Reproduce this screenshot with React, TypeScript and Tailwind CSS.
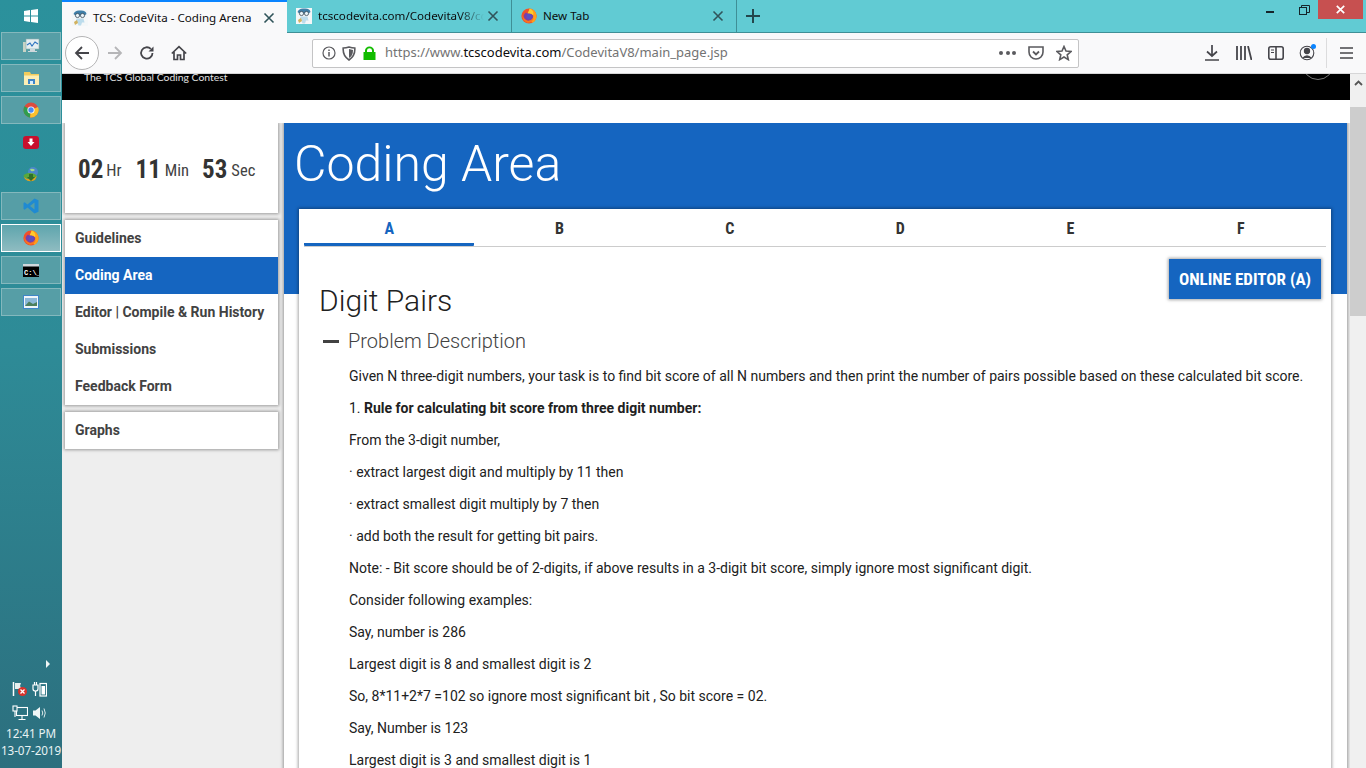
import React from "react";

const roboto = "font-['Roboto',sans-serif]";

function Mascot() {
  return (
    <svg width="16" height="16" viewBox="0 0 16 16" className="shrink-0">
      <rect width="16" height="16" fill="#f4f7f8" />
      <path d="M1.5 4 Q3 0 8 0.5 Q14 0 14.5 4 L12 6 L4 6 Z" fill="#3f7fa8" />
      <circle cx="5.5" cy="5.5" r="2.1" fill="#e8f3f8" stroke="#3a4a58" strokeWidth="0.8" />
      <circle cx="10.5" cy="5.5" r="2.1" fill="#e8f3f8" stroke="#3a4a58" strokeWidth="0.8" />
      <path d="M4.5 8.5 h7 l1 4 h-2.5 l-1 3 h-2.5 l-1-3 h-2 z" fill="#bcdcec" />
      <path d="M2 12 l3-2 1 3 -3 2z" fill="#d2b25e" />
    </svg>
  );
}

function Firefox({ size = 16 }: { size?: number }) {
  return (
    <svg width={size} height={size} viewBox="0 0 16 16" className="shrink-0">
      <circle cx="8" cy="8" r="7.6" fill="#f0502a" />
      <path d="M8 .4A7.6 7.6 0 0 1 15.6 8 7.6 7.6 0 0 1 11 15 L8 8z" fill="#ff9f1c" />
      <path d="M4.5 4.8 A4.6 4.6 0 1 0 11.8 6.6 L8 5.2z" fill="#7b3fa6" />
      <circle cx="8" cy="8.4" r="2.6" fill="#5a4fc4" />
      <path d="M9 .8 Q13.5 3 12 7.2 Q10 4.6 6.6 5.6 Q7.4 3 9 .8z" fill="#ffcb2e" />
      <path d="M1.2 6 Q2 11 6 12.6 Q10 13.6 12.8 9.6 Q11.5 15 6.5 14.8 Q1 13 1.2 6z" fill="#f9761f" />
    </svg>
  );
}

function Chrome() {
  return (
    <svg width="16" height="16" viewBox="0 0 16 16">
      <circle cx="8" cy="8" r="7.5" fill="#dd4b3e" />
      <path d="M8 8 L1.5 4.2 A7.5 7.5 0 0 0 7 15.4z" fill="#2f9e4f" />
      <path d="M8 8 L15 5 A7.5 7.5 0 0 1 7 15.4z" fill="#fbc02d" />
      <circle cx="8" cy="8" r="3.6" fill="#fff" />
      <circle cx="8" cy="8" r="2.7" fill="#4a8af4" />
    </svg>
  );
}

function Dock({ children, framed, active }: { children: React.ReactNode; framed?: boolean; active?: boolean }) {
  return (
    <div
      className={
        "h-7 flex items-center justify-center mx-px w-[60px] " +
        (active
          ? "border-[1.5px] border-white bg-[linear-gradient(#5ea5ad,#8fbcc1)]"
          : framed
            ? "border border-[#84b8bd] bg-[#569ea6]"
            : "")
      }
    >
      {children}
    </div>
  );
}

function Taskbar() {
  return (
    <aside className={"w-[62px] shrink-0 h-full flex flex-col bg-[linear-gradient(#2b919c,#2e8b97_45%,#2c6f7e)] text-[#e6f2f3] " + roboto}>
      <div className="h-8 flex items-center justify-center shrink-0">
        <svg width="14" height="14" viewBox="0 0 14 14" fill="#fff">
          <path d="M0 2 L6 1.1 V6.6 H0z M7 1 L14 0 V6.6 H7z M0 7.4 H6 V12.9 L0 12z M7 7.4 H14 V14 L7 13z" />
        </svg>
      </div>
      <div className="flex flex-col gap-1">
        <Dock framed>
          <svg width="18" height="18" viewBox="0 0 18 18">
            <rect x="1" y="5" width="3" height="10" fill="#c9d3c5" />
            <rect x="4" y="2" width="13" height="10" fill="#e6eef1" stroke="#8aa" strokeWidth=".6" />
            <path d="M5 8 L8 6 L10 9 L13 5 L16 7" stroke="#2f74c0" fill="none" strokeWidth="1.1" />
            <path d="M8 12 h5 v2 h2 v1 H6 v-1 h2z" fill="#cfd8dc" />
          </svg>
        </Dock>
        <Dock framed>
          <svg width="17" height="15" viewBox="0 0 17 15">
            <path d="M1 1 h6 l1 2 h8 v11 H1z" fill="#f2cc5c" />
            <rect x="1" y="4.5" width="15" height="9.5" fill="#fdeeb4" />
            <rect x="5" y="8" width="7" height="5" fill="#3f86c8" />
            <rect x="7" y="10" width="3" height="3" fill="#d9eefb" />
          </svg>
        </Dock>
        <Dock framed>
          <Chrome />
        </Dock>
        <Dock>
          <svg width="16" height="13" viewBox="0 0 16 13">
            <rect width="16" height="13" rx="3" fill="#c8102e" />
            <path d="M6.5 2.5 h3 v3.5 h2 L8 10 4.5 6 h2z" fill="#fff" />
          </svg>
        </Dock>
        <Dock>
          <svg width="17" height="17" viewBox="0 0 17 17">
            <circle cx="10" cy="6" r="5" fill="#4c87c9" />
            <path d="M7 3 Q10 2 12 4 Q10 6 8 5z" fill="#a5d98a" />
            <ellipse cx="7" cy="10" rx="6.5" ry="3" fill="#58a83b" />
            <path d="M1 11 Q7 16 14 10 L12 14 Q6 17 2 13z" fill="#e0a11f" />
            <path d="M6 8 h4 v3 h2 l-4 4 -4-4 h2z" fill="#2f6f2a" />
          </svg>
        </Dock>
        <Dock framed>
          <svg width="16" height="16" viewBox="0 0 16 16">
            <path d="M11.5 0.5 L15.5 2.3 V13.7 L11.5 15.5 L4.5 9.5 L1.7 11.7 L0.5 11 V5 L1.7 4.3 L4.5 6.5z M11.5 4.5 L7 8 L11.5 11.5z" fill="#1f8ad2" fillRule="evenodd" />
          </svg>
        </Dock>
        <Dock active>
          <Firefox />
        </Dock>
        <Dock framed>
          <svg width="16" height="13" viewBox="0 0 16 13">
            <rect width="16" height="13" fill="#000" />
            <rect width="16" height="2.5" fill="#cfd8dc" />
            <text x="1" y="10.5" fontSize="7" fontFamily="Liberation Mono" fontWeight="700" fill="#fff">C:\_</text>
          </svg>
        </Dock>
        <Dock framed>
          <svg width="16" height="14" viewBox="0 0 16 14">
            <rect x=".5" y=".5" width="15" height="13" fill="#eef5fa" stroke="#3f86c8" />
            <rect x="2" y="3" width="12" height="8" fill="#8cb8d8" />
            <path d="M2 11 L6 6.5 L10 9 L14 7 V11z" fill="#4d7f5c" />
          </svg>
        </Dock>
      </div>
      <div className="flex-1" />
      <div className="flex justify-end pr-[11px] mb-[13px]">
        <svg width="6" height="8" viewBox="0 0 6 8" fill="#f0f6f6"><path d="M1 0 L5 4 L1 8z" /></svg>
      </div>
      <div className="grid grid-cols-2 gap-y-[8px] w-[40px] ml-3 mb-[4px]">
        <svg width="16" height="16" viewBox="0 0 16 16">
          <path d="M1.5 1 V15" stroke="#fff" strokeWidth="1.5" />
          <path d="M3 2 H9 L8 5 L10 8 H3z" fill="#e8f0f0" />
          <circle cx="10.5" cy="10.5" r="4.5" fill="#d9332b" />
          <path d="M8.5 8.5 L12.5 12.5 M12.5 8.5 L8.5 12.5" stroke="#fff" strokeWidth="1.3" />
        </svg>
        <svg width="15" height="16" viewBox="0 0 15 16" fill="none" stroke="#fff" strokeWidth="1.2">
          <path d="M1 4 H6 V8 Q6 10 3.5 10 Q1 10 1 8z M2.5 4 V1 M4.5 4 V1 M3.5 10 V15" />
          <rect x="8" y="2.5" width="6.5" height="12.5" />
          <rect x="9.5" y="5" width="3.5" height="8.5" fill="#fff" stroke="none" />
        </svg>
        <svg width="16" height="16" viewBox="0 0 16 16" fill="none" stroke="#fff" strokeWidth="1.1">
          <rect x="4.5" y="2.5" width="11" height="8" />
          <path d="M10 11 V14 M6.5 14.5 H13.5" />
          <rect x="1" y="1" width="4" height="5" fill="#2c7180" />
          <path d="M3 6 V12" />
        </svg>
        <svg width="16" height="16" viewBox="0 0 16 16" fill="none">
          <path d="M1 5.5 H3.5 L8 2 V14 L3.5 10.5 H1z" fill="#f0f6f6" />
          <path d="M10 5.5 Q11.5 8 10 10.5 M12 3.5 Q14.5 8 12 12.5" stroke="#dce9ea" strokeWidth="1" />
        </svg>
      </div>
      <div className="text-center text-[11.7px] leading-[17px] mb-[9.5px] text-[#e8f3f4] font-['Noto_Sans','Open_Sans',sans-serif] tracking-[-0.1px]">
        <div>12:41 PM</div>
        <div>13-07-2019</div>
      </div>
    </aside>
  );
}

function X() {
  return (
    <svg width="12" height="12" viewBox="0 0 12 12" stroke="#30545a" strokeWidth="1.6" className="shrink-0">
      <path d="M1.5 1.5 L10.5 10.5 M10.5 1.5 L1.5 10.5" />
    </svg>
  );
}

function TabBar() {
  return (
    <div className="h-[33px] shrink-0 bg-[#61cbd3] flex border-b border-[#3f8f96] font-['Noto_Sans','Open_Sans',sans-serif] text-[11.6px] text-[#0c0c0d]">
      <div className="w-[225px] h-[33px] bg-[#f9f9fa] border-t-2 border-[#0a84ff] flex items-center pl-[10px] pr-[12px] shrink-0">
        <Mascot />
        <span className="ml-[5px] flex-1 whitespace-nowrap">TCS: CodeVita - Coding Arena</span>
        <X />
      </div>
      <div className="w-[225px] pl-[9px] pr-[12px] flex items-center border-r border-[#3f8f96] shrink-0">
        <Mascot />
        <span className="ml-[6px] w-[166px] overflow-hidden whitespace-nowrap [mask-image:linear-gradient(to_right,#000_85%,transparent)]">tcscodevita.com/CodevitaV8/coding</span>
        <span className="flex-1" />
        <X />
      </div>
      <div className="w-[225px] pl-[9px] pr-[12px] flex items-center border-r border-[#3f8f96] shrink-0">
        <Firefox />
        <span className="ml-[6px] flex-1">New Tab</span>
        <X />
      </div>
      <div className="w-[33px] flex items-center justify-center pr-[1px]">
        <svg width="14" height="14" viewBox="0 0 14 14" stroke="#24474c" strokeWidth="2"><path d="M7 0 V14 M0 7 H14" /></svg>
      </div>
      <div className="flex-1" />
      <div className="flex h-[19px] items-start mr-[3px]">
        <div className="w-[30px] h-full relative"><span className="absolute left-[8px] top-[11px] w-2 h-[2px] bg-[#15252a]" /></div>
        <div className="w-[30px] h-full flex justify-center pt-[5px] pl-[2px]">
          <svg width="11" height="10" viewBox="0 0 11 10" fill="none" stroke="#15252a"><rect x=".5" y="2.5" width="7" height="7" strokeWidth="1" /><path d="M2.5 2.5 V.5 H10.5 V7.5 H7.5" strokeWidth="1" /></svg>
        </div>
        <div className="w-[45px] h-full bg-[#c75050] flex items-center justify-center">
          <svg width="9" height="9" viewBox="0 0 9 9" stroke="#fff" strokeWidth="1.7"><path d="M.8.8 L8.2 8.2 M8.2.8 L.8 8.2" /></svg>
        </div>
      </div>
    </div>
  );
}

function ToolBar() {
  return (
    <div className="h-[41px] shrink-0 bg-[#f9f9fa] border-b border-[#d6d6d7] flex items-center font-['Noto_Sans','Open_Sans',sans-serif]">
      <div className="w-[34px] h-[34px] rounded-full border border-[#b4b4b5] bg-white ml-[3px] flex items-center justify-center">
        <svg width="16" height="16" viewBox="0 0 16 16" fill="none" stroke="#45454a" strokeWidth="1.8"><path d="M15 8 H2 M8 2 L2 8 L8 14" /></svg>
      </div>
      <svg width="16" height="16" viewBox="0 0 16 16" fill="none" stroke="#b6b6b8" strokeWidth="1.8" className="ml-[8px]"><path d="M1 8 H14 M8 2 L14 8 L8 14" /></svg>
      <svg width="16" height="16" viewBox="0 0 16 16" fill="none" stroke="#45454a" strokeWidth="1.8" className="ml-[16px]"><path d="M13.5 8 A5.7 5.7 0 1 1 11.8 3.9" /><path d="M14.5 1.5 V6.5 H9.5z" fill="#45454a" stroke="none" /></svg>
      <svg width="16" height="16" viewBox="0 0 16 16" fill="none" stroke="#45454a" strokeWidth="1.7" className="ml-[16px]"><path d="M.8 8.5 L8 1.6 L15.2 8.5 M3 7 V14.5 H6.5 V10 H9.5 V14.5 H13 V7" /></svg>
      <div className="ml-[125px] w-[767px] h-[29px] rounded-[2px] border border-[#c4c4c5] bg-white flex items-center pl-[9px] pr-[6px] shrink-0">
        <svg width="14" height="14" viewBox="0 0 14 14" fill="none" stroke="#5a5a5e" strokeWidth="1.2"><circle cx="7" cy="7" r="6" /><path d="M7 6 V10.5 M7 3.4 V5" strokeWidth="1.5" /></svg>
        <svg width="14" height="15" viewBox="0 0 14 15" className="ml-[6px]" fill="none" stroke="#5a5a5e" strokeWidth="1.6"><path d="M1.2 2 Q4 2 7 1 Q10 2 12.8 2 Q13.4 10 7 14 Q.6 10 1.2 2z" /><path d="M7 3 V12 Q11 10 11 4z" fill="#5a5a5e" stroke="none" /></svg>
        <svg width="13" height="14" viewBox="0 0 13 14" className="ml-[7px]"><path d="M2 6 V4.5 A4.5 4 0 0 1 11 4.5 V6 H12.5 V14 H.5 V6z M4 6 H9 V4.5 A2.5 2.2 0 0 0 4 4.5z" fill="#12bc00" fillRule="evenodd" /></svg>
        <div className="ml-[9px] text-[13px] text-[#737373] whitespace-nowrap">https://www.<span className="text-[#0c0c0d]">tcscodevita.com</span>/CodevitaV8/main_page.jsp</div>
        <div className="flex-1" />
        <div className="flex gap-[2.5px]">
          <span className="w-[4px] h-[4px] rounded-full bg-[#5a5a5e]" />
          <span className="w-[4px] h-[4px] rounded-full bg-[#5a5a5e]" />
          <span className="w-[4px] h-[4px] rounded-full bg-[#5a5a5e]" />
        </div>
        <svg width="16" height="15" viewBox="0 0 16 15" fill="none" stroke="#5a5a5e" strokeWidth="1.6" className="ml-[12px]"><path d="M1 1 H15 V6 A7 7 0 0 1 1 6z" /><path d="M5 5.5 L8 8.5 L11 5.5" strokeWidth="1.8" /></svg>
        <svg width="16" height="16" viewBox="0 0 16 16" fill="none" stroke="#5a5a5e" strokeWidth="1.6" className="ml-[12px]"><path d="M8 1.5 L10 6 L15 6.5 L11.2 9.8 L12.3 14.6 L8 12 L3.7 14.6 L4.8 9.8 L1 6.5 L6 6z" /></svg>
      </div>
      <svg width="14" height="16" viewBox="0 0 14 16" fill="none" stroke="#45454a" strokeWidth="1.7" className="ml-[126px]"><path d="M7 0 V11 M2 6.5 L7 11 L12 6.5 M0 15 H14" /></svg>
      <svg width="16" height="14" viewBox="0 0 16 14" fill="none" stroke="#45454a" strokeWidth="1.8" className="ml-[17px]"><path d="M1 0 V14 M5 0 V14 M9 0 V14 M12 0 L15.5 14" /></svg>
      <svg width="16" height="14" viewBox="0 0 16 14" fill="none" stroke="#45454a" strokeWidth="1.6" className="ml-[16px]"><rect x=".8" y=".8" width="14.4" height="12.4" rx="2" /><path d="M8 1 V13" /><path d="M3 4 H6 M3 6.5 H6" strokeWidth="1" /></svg>
      <div className="relative ml-[15px] w-[16px] h-[16px]">
        <svg width="16" height="16" viewBox="0 0 16 16" fill="none" stroke="#45454a" strokeWidth="1.1"><circle cx="8" cy="8" r="6.8" /><circle cx="8" cy="6" r="2.6" fill="#45454a" /><path d="M3 13 Q8 7.5 13 13" fill="#45454a" stroke="none" /></svg>
        <span className="absolute -right-[1px] -top-[1px] w-[5px] h-[5px] rounded-full bg-[#0a84ff]" />
      </div>
      <div className="ml-[11px] w-px h-[30px] bg-[#dcdcdd]" />
      <svg width="13" height="12" viewBox="0 0 13 12" stroke="#45454a" strokeWidth="1.7" className="ml-[13px]"><path d="M0 1 H13 M0 6 H13 M0 11 H13" /></svg>
    </div>
  );
}

const lines: React.ReactNode[] = [
  "Given N three-digit numbers, your task is to find bit score of all N numbers and then print the number of pairs possible based on these calculated bit score.",
  <>1. <b className="font-bold">Rule for calculating bit score from three digit number:</b></>,
  "From the 3-digit number,",
  "· extract largest digit and multiply by 11 then",
  "· extract smallest digit multiply by 7 then",
  "· add both the result for getting bit pairs.",
  "Note: - Bit score should be of 2-digits, if above results in a 3-digit bit score, simply ignore most significant digit.",
  "Consider following examples:",
  "Say, number is 286",
  "Largest digit is 8 and smallest digit is 2",
  "So, 8*11+2*7 =102 so ignore most significant bit , So bit score = 02.",
  "Say, Number is 123",
  "Largest digit is 3 and smallest digit is 1",
];

const cardShadow = "shadow-[0_0_3px_1px_rgba(0,0,0,0.35)]";

function NavItem({ label, active }: { label: string; active?: boolean }) {
  return (
    <div className={"h-[37px] pl-[10px] flex items-center text-[14px] font-bold " + (active ? "bg-[#1565c0] text-white" : "text-[#424242]")}>
      {label}
    </div>
  );
}

function Sidebar() {
  return (
    <div className="w-[220px] shrink-0 pl-[3px] pr-[4px] flex flex-col gap-[7px]">
      <div className={"h-[90px] bg-white flex items-center pl-[13px] pt-[3px] text-[#333] " + cardShadow}>
        <b className="text-[25px] font-bold font-stretch-condensed">02</b>
        <span className="ml-[3px] mt-[4px] text-[16.5px] font-stretch-condensed text-[#424242]">Hr</span>
        <b className="ml-[14px] text-[25px] font-bold font-stretch-condensed">11</b>
        <span className="ml-[4px] mt-[4px] text-[16.5px] font-stretch-condensed text-[#424242]">Min</span>
        <b className="ml-[13px] text-[25px] font-bold font-stretch-condensed">53</b>
        <span className="ml-[4px] mt-[4px] text-[16.5px] font-stretch-condensed text-[#424242]">Sec</span>
      </div>
      <div className={"bg-white " + cardShadow}>
        <NavItem label="Guidelines" />
        <NavItem label="Coding Area" active />
        <NavItem label="Editor | Compile & Run History" />
        <NavItem label="Submissions" />
        <NavItem label="Feedback Form" />
      </div>
      <div className={"bg-white " + cardShadow}>
        <NavItem label="Graphs" />
      </div>
    </div>
  );
}

function Main() {
  return (
    <div className={"w-[1063px] ml-[2px] shrink-0 bg-white relative h-[700px] " + cardShadow}>
      <div className="h-[171px] bg-[#1565c0] pl-[10px] pt-[8px]">
        <div className="text-[50px] leading-[66px] font-light text-white whitespace-nowrap">Coding Area</div>
      </div>
      <div className={"absolute left-[15px] top-[86px] w-[1032px] h-[620px] bg-white " + cardShadow}>
        <div className="mx-[5px] h-[38px] grid grid-cols-6 border-b border-[#cccccc] font-bold text-[16px] text-[#333] font-stretch-condensed">
          {["A", "B", "C", "D", "E", "F"].map((t, i) => (
            <div key={t} className={"flex items-center justify-center h-[37px] " + (i === 0 ? "text-[#1565c0] border-b-[3px] border-[#1565c0] pt-[5px] rounded-b-[1px]" : "pt-[3px]")}>
              {t}
            </div>
          ))}
        </div>
        <div className={"absolute right-[10px] top-[50px] w-[152px] h-[40px] pt-[1px] bg-[#1565c0] text-white flex items-center justify-center font-bold text-[17px] whitespace-nowrap font-stretch-condensed " + cardShadow}>
          ONLINE EDITOR (A)
        </div>
        <div className="pl-[20px] pt-[33px]">
          <div className="text-[30px] leading-[42px] font-light text-[#212121]">Digit Pairs</div>
          <div className="flex items-center mt-[3px] h-[32px]">
            <span className="w-[16px] h-[3px] ml-[4px] bg-[#424242]" />
            <span className="ml-[9px] text-[20px] font-light text-[#424242]">Problem Description</span>
          </div>
          <div className="pl-[30px] pt-[3px] text-[14px] leading-[32px] text-[#212121]">
            {lines.map((l, i) => (
              <div key={i} className="whitespace-nowrap">{l}</div>
            ))}
          </div>
        </div>
      </div>
    </div>
  );
}

function Page() {
  return (
    <div className={"flex-1 flex bg-[#eeeeee] overflow-hidden " + roboto}>
      <div className="flex-1 min-w-0 flex flex-col overflow-hidden">
        <div className="h-[26px] shrink-0 bg-black pl-[22px] text-[10.4px] leading-[7px] text-[#e0e0e0] relative overflow-hidden font-['Lato',sans-serif]">
          The TCS Global Coding Contest
          <span className="absolute right-[16px] -top-[17px] w-[32px] h-[23px] rounded-b-full border border-[#777]" />
        </div>
        <div className="h-[23px] shrink-0 bg-white" />
        <div className="flex-1 flex overflow-hidden">
          <Sidebar />
          <Main />
        </div>
      </div>
      <div className="w-[16px] shrink-0 bg-[#f0f0f0] flex flex-col">
        <div className="h-[33px] flex justify-center pt-[6px]">
          <svg width="9" height="6" viewBox="0 0 9 6" fill="none" stroke="#555" strokeWidth="1.8"><path d="M1 5 L4.5 1.5 L8 5" /></svg>
        </div>
        <div className="h-[209px] bg-[#cdcdcd]" />
      </div>
    </div>
  );
}

export default function App() {
  return (
    <div className="w-[1366px] h-[768px] flex overflow-hidden bg-white">
      <Taskbar />
      <div className="flex-1 min-w-0 flex flex-col">
        <TabBar />
        <ToolBar />
        <Page />
      </div>
    </div>
  );
}
